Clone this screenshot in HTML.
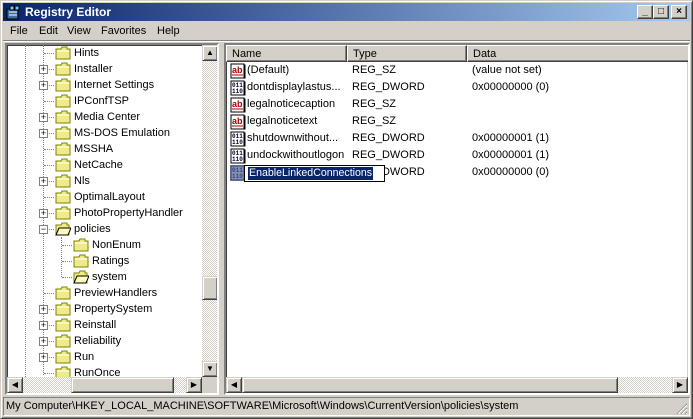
<!DOCTYPE html>
<html><head><meta charset="utf-8"><style>
*{margin:0;padding:0;box-sizing:border-box}
body{width:693px;height:419px;background:#d4d0c8;font-family:"Liberation Sans",Tahoma,sans-serif;font-size:11px;position:relative;overflow:hidden;color:#000}
.a{position:absolute}
.win{left:0;top:0;width:693px;height:419px;border:1px solid;border-color:#d4d0c8 #404040 #404040 #d4d0c8;box-shadow:inset 1px 1px #fff,inset -1px -1px #808080}
.title{left:3px;top:3px;width:687px;height:18px;background:linear-gradient(90deg,#0a246a,#a6caf0);color:#fff;font-weight:bold;font-size:12px;line-height:18px;padding-left:22px}
.tb{top:5px;width:16px;height:14px;background:#d4d0c8;border:1px solid;border-color:#fff #404040 #404040 #fff;box-shadow:inset -1px -1px #808080;font-size:10px;font-weight:bold;text-align:center;line-height:11px}
.menu{top:23px;left:10px;font-size:11px;line-height:17px}
.menu span{position:absolute;white-space:nowrap}
.sunk{border:2px solid;border-color:#808080 #fff #fff #808080;box-shadow:inset 1px 1px #404040,inset -1px -1px #d4d0c8;background:#fff}
.row{position:absolute;height:16px;line-height:16px;white-space:nowrap}
.pl{position:absolute;width:9px;height:9px;border:1px solid #808080;background:#fff;font-size:9px;line-height:7px;text-align:center}
.sb{position:absolute;background:#d4d0c8;border:1px solid;border-color:#d4d0c8 #404040 #404040 #d4d0c8;box-shadow:inset 1px 1px #fff,inset -1px -1px #808080}
.chk{position:absolute;background-color:#eae8e3;background-image:repeating-conic-gradient(#d4d0c8 0 25%,#fff 0 50%);background-size:2px 2px}
.hdr{position:absolute;top:0;height:17px;line-height:16px;padding-left:5px;background:#d4d0c8;border:1px solid;border-color:#fff #404040 #404040 #fff;box-shadow:inset -1px -1px #808080}
.vr{position:absolute;height:17px;line-height:17px;white-space:nowrap}
</style></head><body>
<div class="a win"></div>
<div class="a title">Registry Editor</div>
<svg class="a" style="left:5px;top:4px" width="16" height="16"><rect x="2" y="5" width="11" height="10" fill="#3a6ea5" stroke="#000"/><rect x="5" y="2" width="4" height="4" fill="#6cf" stroke="#000"/><rect x="10" y="2" width="4" height="4" fill="#6cf" stroke="#000"/><path d="M4 8h8M4 11h8" stroke="#fff"/></svg>
<div class="a tb" style="left:637px">_</div>
<div class="a tb" style="left:653px">□</div>
<div class="a tb" style="left:671px">×</div>
<div class="a menu"><span style="left:0">File</span><span style="left:29px">Edit</span><span style="left:57px">View</span><span style="left:91px">Favorites</span><span style="left:147px">Help</span></div>
<div class="a" style="left:3px;top:40px;width:687px;height:1px;background:#808080"></div>
<div class="a" style="left:3px;top:41px;width:687px;height:1px;background:#fff"></div>

<svg width="0" height="0" style="position:absolute"><defs>
<symbol id="f" viewBox="0 0 16 14"><path d="M1 3h5l1-2h5v2h3v10H1z" fill="#eeec8a" stroke="#808000"/><path d="M2 5h12" stroke="#fff"/></symbol>
<symbol id="fo" viewBox="0 0 16 14"><path d="M1 3h5l1-2h5v2h2v10H1z" fill="#eeec8a" stroke="#808000"/><path d="M1 13l3-7h12l-3 7z" fill="#fffcc0" stroke="#000"/></symbol>
<symbol id="ab" viewBox="0 0 16 16"><rect x="1" y="1" width="13" height="14" fill="#fff" stroke="#000"/><path d="M14 2h1v13H2" stroke="#000" fill="none"/><text x="2" y="10" font-size="9" font-weight="bold" fill="#a00" font-family="Liberation Sans">ab</text><path d="M2 12h11" stroke="#a00"/></symbol>
<symbol id="bn" viewBox="0 0 16 16"><rect x="1" y="1" width="13" height="14" fill="#fff" stroke="#000"/><path d="M14 2h1v13H2" stroke="#000" fill="none"/><text x="2" y="7" font-size="6" font-weight="bold" fill="#003" font-family="Liberation Mono">011</text><text x="2" y="13" font-size="6" font-weight="bold" fill="#003" font-family="Liberation Mono">110</text></symbol>
</defs></svg>

<div class="a sunk" style="left:5px;top:43px;width:214px;height:352px;overflow:hidden">
 <div class="a" style="left:18px;top:0;width:1px;height:348px;border-left:1px dotted #808080"></div>
 <div class="a" style="left:36px;top:0;width:1px;height:330px;border-left:1px dotted #808080"></div>
 <div class="a" style="left:54px;top:192px;width:1px;height:40px;border-left:1px dotted #808080"></div>
 <div style="position:absolute;left:0;top:0;width:200px">
  <div class="row" style="top:0;left:37px;width:160px"><span class="a" style="left:0;top:8px;width:10px;border-top:1px dotted #808080"></span><svg class="a" style="left:11px;top:1px" width="16" height="14"><use href="#f"/></svg><span class="a" style="left:30px">Hints</span></div>
  <div class="row" style="top:16px;left:37px;width:160px"><span class="a" style="left:0;top:8px;width:10px;border-top:1px dotted #808080"></span><svg class="a" style="left:11px;top:1px" width="16" height="14"><use href="#f"/></svg><span class="a" style="left:30px">Installer</span></div>
  <div class="row" style="top:32px;left:37px;width:160px"><span class="a" style="left:0;top:8px;width:10px;border-top:1px dotted #808080"></span><svg class="a" style="left:11px;top:1px" width="16" height="14"><use href="#f"/></svg><span class="a" style="left:30px">Internet Settings</span></div>
  <div class="row" style="top:48px;left:37px;width:160px"><span class="a" style="left:0;top:8px;width:10px;border-top:1px dotted #808080"></span><svg class="a" style="left:11px;top:1px" width="16" height="14"><use href="#f"/></svg><span class="a" style="left:30px">IPConfTSP</span></div>
  <div class="row" style="top:64px;left:37px;width:160px"><span class="a" style="left:0;top:8px;width:10px;border-top:1px dotted #808080"></span><svg class="a" style="left:11px;top:1px" width="16" height="14"><use href="#f"/></svg><span class="a" style="left:30px">Media Center</span></div>
  <div class="row" style="top:80px;left:37px;width:160px"><span class="a" style="left:0;top:8px;width:10px;border-top:1px dotted #808080"></span><svg class="a" style="left:11px;top:1px" width="16" height="14"><use href="#f"/></svg><span class="a" style="left:30px">MS-DOS Emulation</span></div>
  <div class="row" style="top:96px;left:37px;width:160px"><span class="a" style="left:0;top:8px;width:10px;border-top:1px dotted #808080"></span><svg class="a" style="left:11px;top:1px" width="16" height="14"><use href="#f"/></svg><span class="a" style="left:30px">MSSHA</span></div>
  <div class="row" style="top:112px;left:37px;width:160px"><span class="a" style="left:0;top:8px;width:10px;border-top:1px dotted #808080"></span><svg class="a" style="left:11px;top:1px" width="16" height="14"><use href="#f"/></svg><span class="a" style="left:30px">NetCache</span></div>
  <div class="row" style="top:128px;left:37px;width:160px"><span class="a" style="left:0;top:8px;width:10px;border-top:1px dotted #808080"></span><svg class="a" style="left:11px;top:1px" width="16" height="14"><use href="#f"/></svg><span class="a" style="left:30px">Nls</span></div>
  <div class="row" style="top:144px;left:37px;width:160px"><span class="a" style="left:0;top:8px;width:10px;border-top:1px dotted #808080"></span><svg class="a" style="left:11px;top:1px" width="16" height="14"><use href="#f"/></svg><span class="a" style="left:30px">OptimalLayout</span></div>
  <div class="row" style="top:160px;left:37px;width:160px"><span class="a" style="left:0;top:8px;width:10px;border-top:1px dotted #808080"></span><svg class="a" style="left:11px;top:1px" width="16" height="14"><use href="#f"/></svg><span class="a" style="left:30px">PhotoPropertyHandler</span></div>
  <div class="row" style="top:176px;left:37px;width:160px"><span class="a" style="left:0;top:8px;width:10px;border-top:1px dotted #808080"></span><svg class="a" style="left:11px;top:1px" width="16" height="14"><use href="#fo"/></svg><span class="a" style="left:30px">policies</span></div>
  <div class="row" style="top:192px;left:55px;width:140px"><span class="a" style="left:0;top:8px;width:10px;border-top:1px dotted #808080"></span><svg class="a" style="left:11px;top:1px" width="16" height="14"><use href="#f"/></svg><span class="a" style="left:30px">NonEnum</span></div>
  <div class="row" style="top:208px;left:55px;width:140px"><span class="a" style="left:0;top:8px;width:10px;border-top:1px dotted #808080"></span><svg class="a" style="left:11px;top:1px" width="16" height="14"><use href="#f"/></svg><span class="a" style="left:30px">Ratings</span></div>
  <div class="row" style="top:224px;left:55px;width:140px"><span class="a" style="left:0;top:8px;width:10px;border-top:1px dotted #808080"></span><svg class="a" style="left:11px;top:1px" width="16" height="14"><use href="#fo"/></svg><span class="a" style="left:30px">system</span></div>
  <div class="row" style="top:240px;left:37px;width:160px"><span class="a" style="left:0;top:8px;width:10px;border-top:1px dotted #808080"></span><svg class="a" style="left:11px;top:1px" width="16" height="14"><use href="#f"/></svg><span class="a" style="left:30px">PreviewHandlers</span></div>
  <div class="row" style="top:256px;left:37px;width:160px"><span class="a" style="left:0;top:8px;width:10px;border-top:1px dotted #808080"></span><svg class="a" style="left:11px;top:1px" width="16" height="14"><use href="#f"/></svg><span class="a" style="left:30px">PropertySystem</span></div>
  <div class="row" style="top:272px;left:37px;width:160px"><span class="a" style="left:0;top:8px;width:10px;border-top:1px dotted #808080"></span><svg class="a" style="left:11px;top:1px" width="16" height="14"><use href="#f"/></svg><span class="a" style="left:30px">Reinstall</span></div>
  <div class="row" style="top:288px;left:37px;width:160px"><span class="a" style="left:0;top:8px;width:10px;border-top:1px dotted #808080"></span><svg class="a" style="left:11px;top:1px" width="16" height="14"><use href="#f"/></svg><span class="a" style="left:30px">Reliability</span></div>
  <div class="row" style="top:304px;left:37px;width:160px"><span class="a" style="left:0;top:8px;width:10px;border-top:1px dotted #808080"></span><svg class="a" style="left:11px;top:1px" width="16" height="14"><use href="#f"/></svg><span class="a" style="left:30px">Run</span></div>
  <div class="row" style="top:320px;left:37px;width:160px"><span class="a" style="left:0;top:8px;width:10px;border-top:1px dotted #808080"></span><svg class="a" style="left:11px;top:1px" width="16" height="14"><use href="#f"/></svg><span class="a" style="left:30px">RunOnce</span></div>
  <div class="pl" style="left:32px;top:20px">+</div>
  <div class="pl" style="left:32px;top:36px">+</div>
  <div class="pl" style="left:32px;top:68px">+</div>
  <div class="pl" style="left:32px;top:84px">+</div>
  <div class="pl" style="left:32px;top:132px">+</div>
  <div class="pl" style="left:32px;top:164px">+</div>
  <div class="pl" style="left:32px;top:180px">−</div>
  <div class="pl" style="left:32px;top:260px">+</div>
  <div class="pl" style="left:32px;top:276px">+</div>
  <div class="pl" style="left:32px;top:292px">+</div>
  <div class="pl" style="left:32px;top:308px">+</div>
 </div>
 <div class="chk" style="left:195px;top:0;width:16px;height:332px"></div>
 <div class="sb" style="left:195px;top:0;width:16px;height:16px;font-size:8px;text-align:center;line-height:13px">▲</div>
 <div class="sb" style="left:195px;top:231px;width:16px;height:24px"></div>
 <div class="sb" style="left:195px;top:316px;width:16px;height:16px;font-size:8px;text-align:center;line-height:13px">▼</div>
 <div class="chk" style="left:0;top:332px;width:195px;height:16px"></div>
 <div class="sb" style="left:0;top:332px;width:16px;height:16px;font-size:8px;text-align:center;line-height:14px">◀</div>
 <div class="sb" style="left:64px;top:332px;width:103px;height:16px"></div>
 <div class="sb" style="left:179px;top:332px;width:16px;height:16px;font-size:8px;text-align:center;line-height:14px">▶</div>
 <div class="a" style="left:195px;top:332px;width:16px;height:16px;background:#d4d0c8"></div>
</div>

<div class="a sunk" style="left:224px;top:43px;width:466px;height:352px;overflow:hidden">
 <div class="hdr" style="left:0;width:121px">Name</div>
 <div class="hdr" style="left:121px;width:120px">Type</div>
 <div class="hdr" style="left:241px;width:230px">Data</div>
 <svg class="a" style="left:4px;top:18px" width="16" height="16"><use href="#ab"/></svg><div class="vr" style="left:21px;top:17px">(Default)</div><div class="vr" style="left:126px;top:17px">REG_SZ</div><div class="vr" style="left:246px;top:17px">(value not set)</div>
 <svg class="a" style="left:4px;top:35px" width="16" height="16"><use href="#bn"/></svg><div class="vr" style="left:21px;top:34px">dontdisplaylastus...</div><div class="vr" style="left:126px;top:34px">REG_DWORD</div><div class="vr" style="left:246px;top:34px">0x00000000 (0)</div>
 <svg class="a" style="left:4px;top:52px" width="16" height="16"><use href="#ab"/></svg><div class="vr" style="left:21px;top:51px">legalnoticecaption</div><div class="vr" style="left:126px;top:51px">REG_SZ</div>
 <svg class="a" style="left:4px;top:69px" width="16" height="16"><use href="#ab"/></svg><div class="vr" style="left:21px;top:68px">legalnoticetext</div><div class="vr" style="left:126px;top:68px">REG_SZ</div>
 <svg class="a" style="left:4px;top:86px" width="16" height="16"><use href="#bn"/></svg><div class="vr" style="left:21px;top:85px">shutdownwithout...</div><div class="vr" style="left:126px;top:85px">REG_DWORD</div><div class="vr" style="left:246px;top:85px">0x00000001 (1)</div>
 <svg class="a" style="left:4px;top:103px" width="16" height="16"><use href="#bn"/></svg><div class="vr" style="left:21px;top:102px">undockwithoutlogon</div><div class="vr" style="left:126px;top:102px">REG_DWORD</div><div class="vr" style="left:246px;top:102px">0x00000001 (1)</div>
 <svg class="a" style="left:4px;top:120px;opacity:.6" width="16" height="16"><use href="#bn"/></svg><div class="a" style="left:4px;top:120px;width:16px;height:16px;background:rgba(10,36,106,.5)"></div>
 <div class="vr" style="left:126px;top:119px">REG_DWORD</div><div class="vr" style="left:246px;top:119px">0x00000000 (0)</div>
 <div class="a" style="left:18px;top:120px;width:141px;height:17px;background:#fff;border:1px solid #000"></div>
 <div class="a" style="left:22px;top:122px;height:13px;line-height:13px;background:#0a246a;color:#fff;padding:0 1px;font-size:10.6px">EnableLinkedConnections</div>
 <div class="chk" style="left:0;top:332px;width:462px;height:16px"></div>
 <div class="sb" style="left:0;top:332px;width:16px;height:16px;font-size:8px;text-align:center;line-height:14px">◀</div>
 <div class="sb" style="left:16px;top:332px;width:376px;height:16px"></div>
 <div class="sb" style="left:446px;top:332px;width:16px;height:16px;font-size:8px;text-align:center;line-height:14px">▶</div>
</div>

<div class="a" style="left:3px;top:397px;width:687px;height:19px;border:1px solid;border-color:#808080 #fff #fff #808080;line-height:17px;padding-left:2px;white-space:nowrap;font-size:11px">My Computer\HKEY_LOCAL_MACHINE\SOFTWARE\Microsoft\Windows\CurrentVersion\policies\system</div>
<svg class="a" style="left:676px;top:403px" width="12" height="12"><path d="M11 1L1 11M11 5L5 11M11 9L9 11" stroke="#808080" stroke-width="1"/><path d="M11 2L2 11M11 6L6 11M11 10L10 11" stroke="#fff"/></svg>
</body></html>
